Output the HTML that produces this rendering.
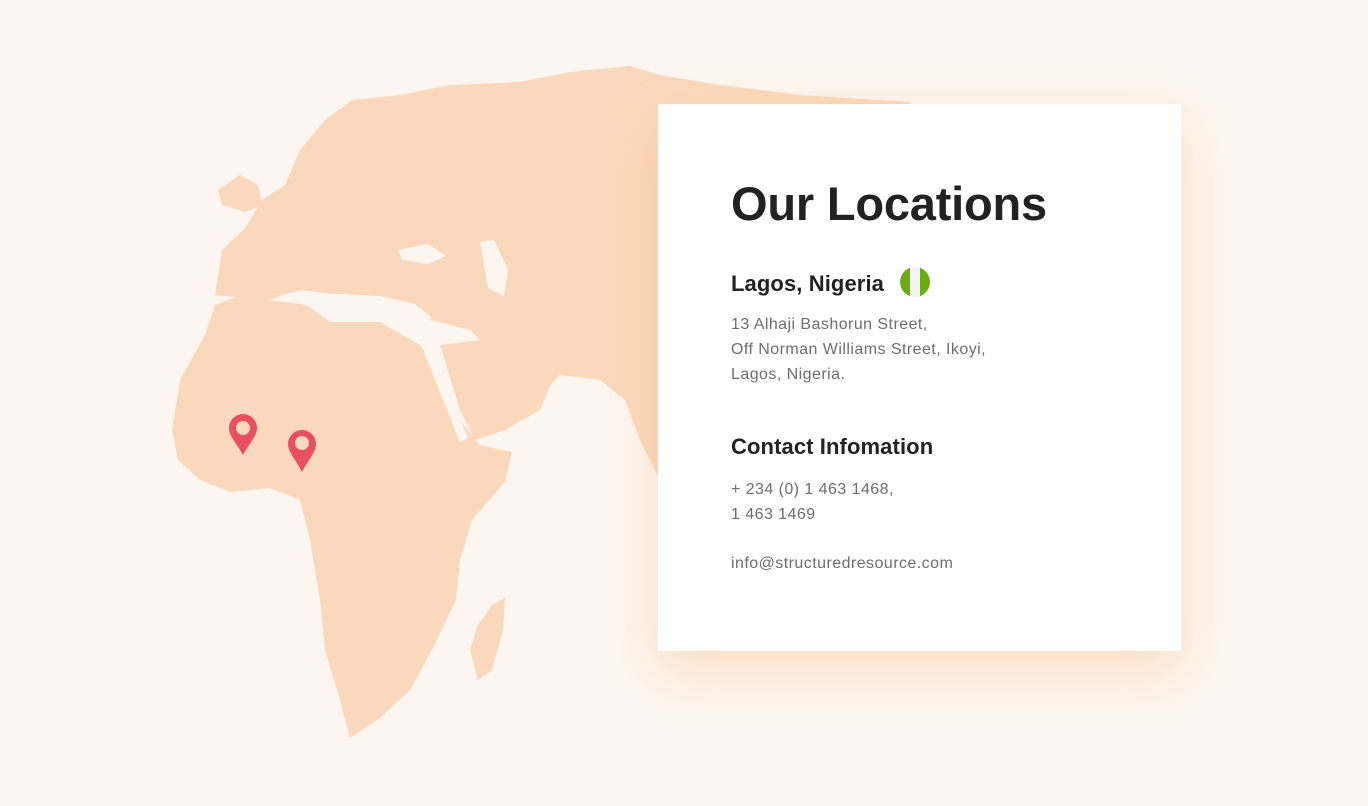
<!DOCTYPE html>
<html><head><meta charset="utf-8"><style>
html,body{margin:0;padding:0}
body{width:1368px;height:806px;background:#fdf6f0;position:relative;overflow:hidden;font-family:"Liberation Sans",sans-serif}
svg.map{position:absolute;left:0;top:0}
.card{position:absolute;left:658px;top:104px;width:523px;height:547px;background:#fff;box-shadow:0 20px 50px rgba(250,190,140,.45)}
h1{position:absolute;left:73px;top:72px;margin:0;font-size:47px;font-weight:700;color:#222;letter-spacing:-0.2px}
h2{position:absolute;left:73px;margin:0;font-size:22px;font-weight:700;color:#222;letter-spacing:0.1px}
p{position:absolute;left:73px;margin:0;font-size:16px;line-height:25px;color:#6d6d6d;letter-spacing:0.45px}
.flag{display:inline-block;width:30px;height:30px;border-radius:50%;vertical-align:-6px;margin-left:10px;background:linear-gradient(90deg,#6aab13 0 33%,#f3f3f3 33% 67%,#6aab13 67%)}
</style></head><body>
<svg class="map" width="1368" height="806" viewBox="0 0 1368 806">
<g fill="#fad8bb">
<path d="M215,295 L222,250 L245,228 L262,200 L285,185 L300,150 L325,120 L352,100 L400,95 L450,85 L520,82 L570,72 L630,66 L660,75 L720,85 L800,95 L910,102 L910,480 L660,480 L640,440 L625,400 L600,380 L560,375 L540,395 L520,380 L490,350 L470,330 L430,320 L400,305 L370,300 L340,295 L300,290 L265,300 Z"/>
<path d="M172,430 L180,380 L205,335 L215,305 L250,292 L300,300 L330,322 L380,322 L420,345 L440,375 L460,420 L480,445 L512,452 L505,482 L472,520 L460,560 L456,600 L432,650 L410,690 L380,718 L350,738 L340,700 L325,650 L320,600 L310,540 L300,500 L270,488 L230,492 L200,480 L178,460 Z"/>
<path d="M440,345 L480,340 L520,360 L552,382 L540,410 L505,430 L475,440 L460,410 Z"/>
<path d="M218,190 L240,175 L258,185 L262,205 L245,212 L222,205 Z"/>
<path d="M492,605 L505,598 L503,630 L492,670 L478,680 L470,650 L478,625 Z"/>
</g>
<g fill="#fdf6f0">
<path d="M268,300 L300,292 L340,294 L380,296 L415,304 L432,318 L415,324 L380,314 L330,312 L300,304 Z"/>
<path d="M398,250 L428,244 L446,256 L428,264 L402,260 Z"/>
<path d="M480,242 L494,240 L508,270 L504,296 L488,288 Z"/>
<path d="M424,352 L432,350 L468,438 L460,442 Z"/>
</g>
<g fill="#e94f5e">
<path d="M243,414 a14,14 0 0 1 14,14 c0,8 -8,16 -14,27 c-6,-11 -14,-19 -14,-27 a14,14 0 0 1 14,-14 z"/>
<path d="M302,430 a14,14 0 0 1 14,14 c0,8 -8,16 -14,28 c-6,-12 -14,-20 -14,-28 a14,14 0 0 1 14,-14 z"/>
</g>
<circle cx="243" cy="428" r="7" fill="#fad8bb"/>
<circle cx="302" cy="443" r="7" fill="#fad8bb"/>
</svg>
<div class="card">
<h1>Our Locations</h1>
<h2 style="top:163px">Lagos, Nigeria <span class="flag"></span></h2>
<p style="top:208px">13 Alhaji Bashorun Street,<br>Off Norman Williams Street, Ikoyi,<br>Lagos, Nigeria.</p>
<h2 style="top:330px">Contact Infomation</h2>
<p style="top:373px">+ 234 (0) 1 463 1468,<br>1 463 1469</p>
<p style="top:447px">info@structuredresource.com</p>
</div>
</body></html>
